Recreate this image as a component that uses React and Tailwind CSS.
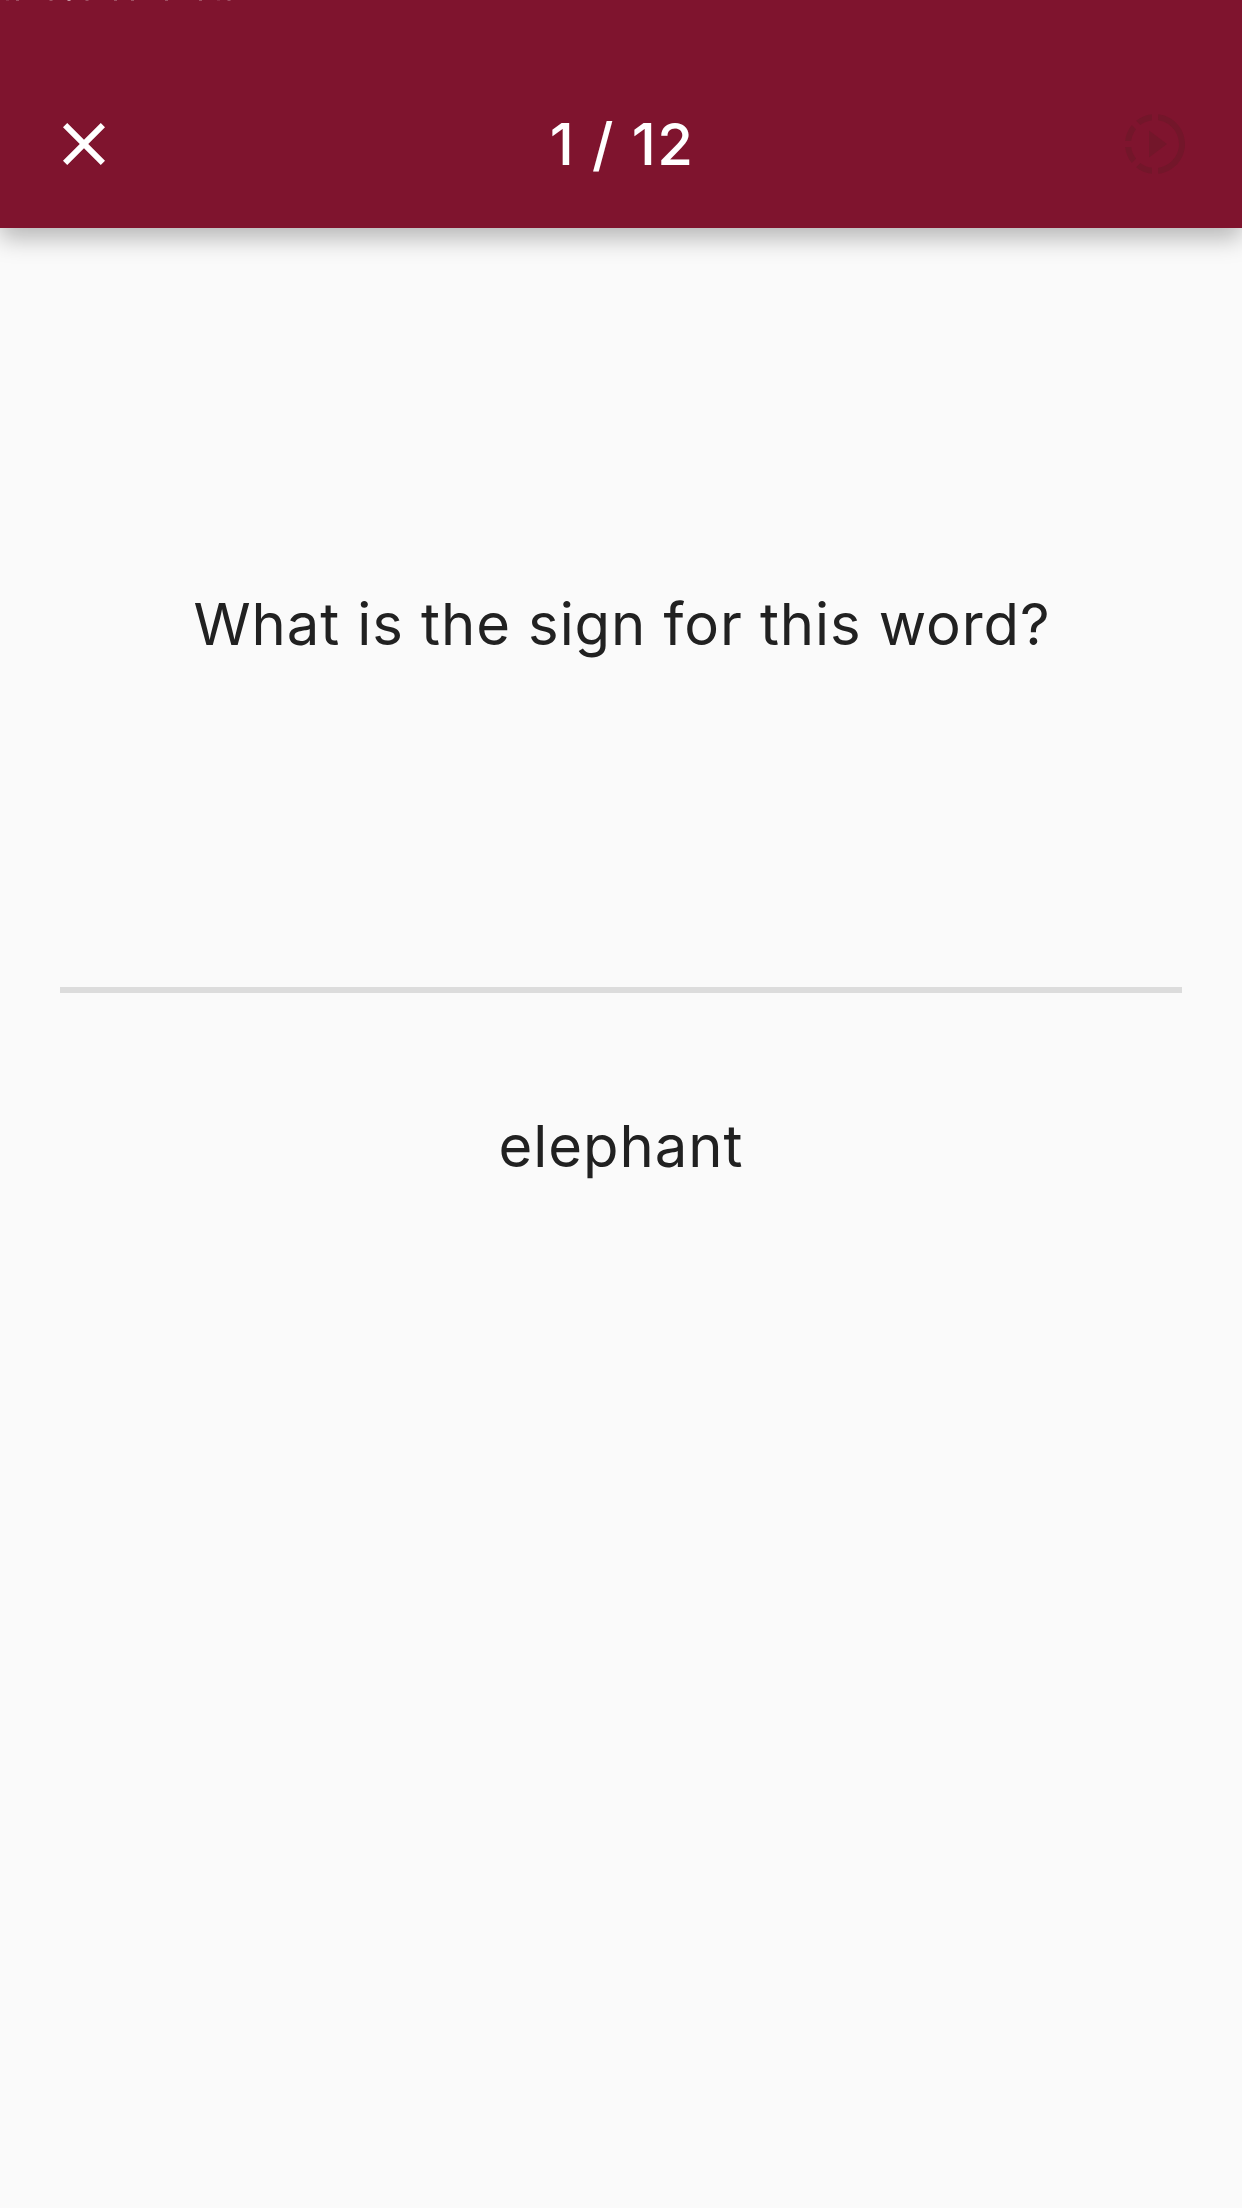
import React from 'react';

const statusMarks = [
  [7, 0.12], [17, 0.25], [50.5, 0.25], [68.5, 0.55], [86.5, 0.25], [115, 0.25],
  [132, 0.25], [166, 0.25], [200, 0.25], [218, 0.1], [228.5, 0.25],
];

export default function App() {
  return (
    <div className="flex h-[2208px] w-[1242px] flex-col overflow-hidden bg-[#fafafa] font-['Inter',sans-serif] text-[#212121]">
      <header className="relative flex h-[228px] shrink-0 items-center justify-between bg-[#7f142e] pt-[60px] shadow-[0_10px_23px_rgba(0,0,0,0.28)]">
        <svg aria-hidden="true" className="absolute top-0 left-0 h-px w-[250px]" viewBox="0 0 250 1" fill="white">
          {statusMarks.map(([x, opacity]) => (
            <rect key={x} x={x - 1} y="0" width="3" height="1" opacity={opacity} />
          ))}
        </svg>
        <button aria-label="Close" className="flex h-[168px] w-[168px] items-center justify-center text-white">
          <svg className="size-[72px]" viewBox="0 0 24 24" fill="currentColor"><path d="M19 6.41 17.59 5 12 10.59 6.41 5 5 6.41 10.59 12 5 17.59 6.41 19 12 13.41 17.59 19 19 17.59 13.41 12z" /></svg>
        </button>
        <h1 className="pl-[2px] text-[58px] leading-[72px] font-medium tracking-[1.4px] text-white">1 / 12</h1>
        <button aria-label="Playback speed" disabled className="flex h-[168px] w-[168px] items-center justify-center pr-[6px] text-[#73162a]">
          <svg className="size-[72px] shrink-0" viewBox="0 0 24 24" fill="currentColor">
            <path d="M10 7.5v9l6-4.5zM11 4.07V2.05c-2.01.2-3.84 1-5.32 2.21L7.1 5.69c1.11-.86 2.44-1.44 3.9-1.62zM5.69 7.1L4.26 5.68C3.05 7.16 2.25 8.99 2.05 11h2.02c.18-1.46.76-2.79 1.62-3.9zM4.07 13H2.05c.2 2.01 1 3.84 2.21 5.32l1.43-1.43c-.86-1.1-1.44-2.43-1.62-3.89zm1.61 6.74C7.16 20.95 9 21.75 11 21.95v-2.02c-1.46-.18-2.79-.76-3.9-1.62l-1.42 1.43zM22 12c0 5.16-3.92 9.42-8.95 9.95v-2.02C16.97 19.41 20 16.05 20 12s-3.03-7.41-6.95-7.93V2.05C18.08 2.58 22 6.83 22 12z" />
          </svg>
        </button>
      </header>
      <main className="flex flex-col">
        <div className="flex h-[759px] items-center justify-center pt-[33px] pl-[2px]"><p className="text-[58px] leading-[72px] tracking-[0.92px]">What is the sign for this word?</p></div>
        <hr className="mx-[60px] h-[6px] border-0 bg-[#dcdcdc]" />
        <p className="mt-[117px] text-center text-[58px] leading-[72px] tracking-[0.95px]">elephant</p>
      </main>
    </div>
  );
}
